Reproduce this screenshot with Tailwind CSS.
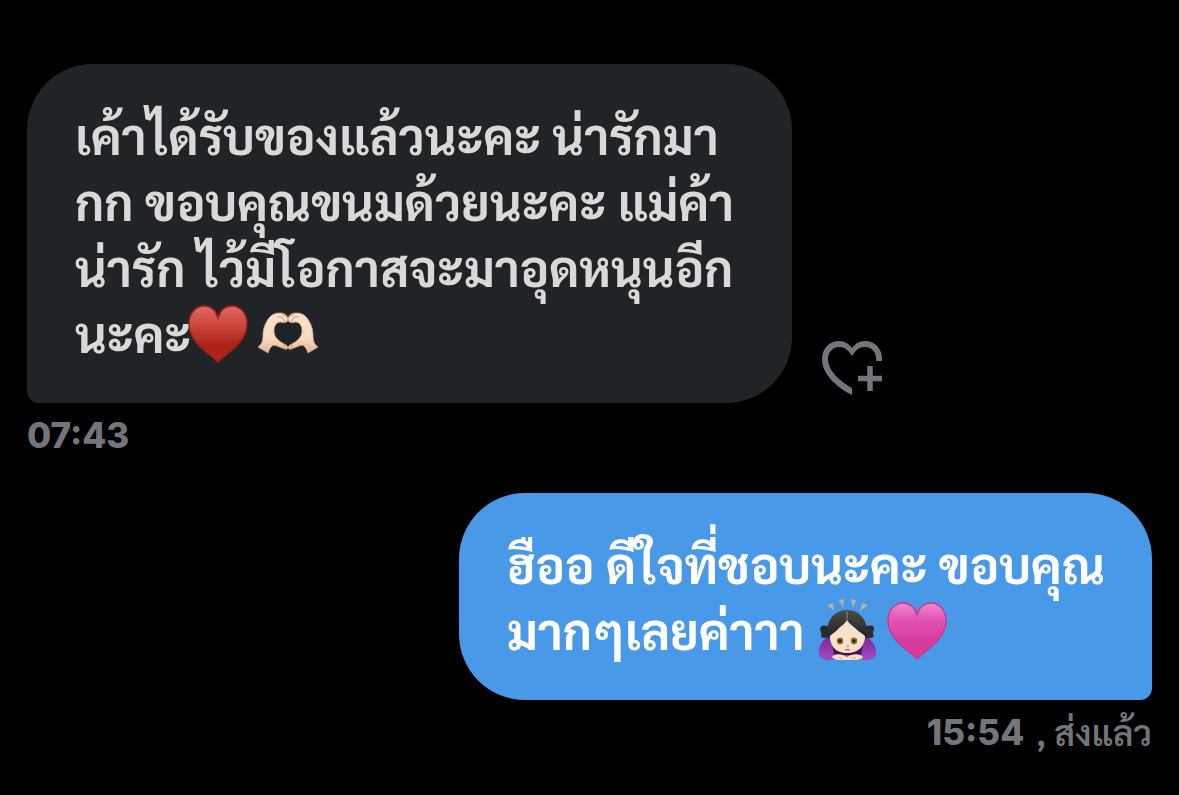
<!DOCTYPE html>
<html lang="th">
<head>
<meta charset="utf-8">
<meta name="viewport" content="width=device-width, initial-scale=1">
<title>ข้อความ</title>
<script src="https://cdn.jsdelivr.net/npm/@tailwindcss/browser@4"></script>
</head>
<body class="min-h-screen bg-black font-['Sarabun','Garuda','Liberation_Sans',sans-serif] antialiased">
<main class="flex flex-col px-[27px] pt-16">
  <article class="flex flex-col">
    <div class="flex items-end gap-[30px]">
      <p class="w-[68%] rounded-[66px] rounded-bl-xl bg-[#212427] px-12 pt-[38px] pb-[37px] text-[49px] leading-[66px] font-bold whitespace-nowrap text-[#d9d9d9]">เค้าได้รับของแล้วนะคะ น่ารักมา<br>กก ขอบคุณขนมด้วยนะคะ แม่ค้า<br>น่ารัก ไว้มีโอกาสจะมาอุดหนุนอีก<br><span class="flex items-center">นะคะ
        <svg class="-ml-1 h-[60px] w-[62px]" viewBox="0 0 62 60" role="img" aria-label="หัวใจสีแดง">
          <defs><linearGradient id="red" x1="0" y1="0" x2="0" y2="1"><stop offset="0" stop-color="#df6a64"/><stop offset=".35" stop-color="#cb463e"/><stop offset=".7" stop-color="#ab2219"/><stop offset="1" stop-color="#b3231c"/></linearGradient></defs>
          <path d="M31 59C25 52 2 40 2 21C2 10 9 3 17 3C24 3 29 8 31 15C33 8 38 3 45 3C53 3 60 10 60 21C60 40 37 52 31 59Z" fill="url(#red)" stroke="#9f1f19" stroke-width="1.5"/>
        </svg>
        <svg class="ml-2 h-[60px] w-[62px]" viewBox="0 0 62 60" role="img" aria-label="มือรูปหัวใจ">
          <defs><linearGradient id="skin" x1="0" y1="0" x2="0" y2="1"><stop offset="0" stop-color="#fae2cc"/><stop offset=".65" stop-color="#f6dac2"/><stop offset="1" stop-color="#e3b394"/></linearGradient></defs>
          <g id="hand"><path d="M1 44C5 41 6 38 6 32C6 25 9 19 12 15C15 11 19 10 23 10C28 10 31 13 31 17C30 20 27 20 24 19C19 19 17 23 17 28C17 35 23 39 29 42C32 44 31 47 28 46C22 44 17 41 15 43C13 45 12 47 11 50Z" fill="url(#skin)" stroke="#d9a688" stroke-width=".8"/><path d="M20 14L25 14L28 19M25 11L30 14M27 42L28 45" fill="none" stroke="#d09b7c" stroke-width="1"/></g>
          <use href="#hand" transform="matrix(-1 0 0 1 62 0)"/>
        </svg></span></p>
      <button type="button" aria-label="เพิ่มความรู้สึก" class="mb-2 text-[#72767a]">
        <svg class="h-[54px] w-[61px]" viewBox="0 0 61 54" fill="none"><path d="M30 54C18 48 0 35 0 18C0 7 8 0 17 0C23 0 27 3 30 7C33 3 37 0 43 0C53 0 61 8 60 20H54C55 12 50 6 43 6C37 6 34 9 30 15C26 9 23 6 17 6C11 6 6 11 6 18C6 30 18 40 30 47Z" fill="currentColor"/><path d="M48 25V50M36 37.500H60" stroke="currentColor" stroke-width="5.500"/></svg>
      </button>
    </div>
    <time datetime="07:43" class="mt-2 font-['Inter'] text-[35px] leading-[48px] font-extrabold text-[#72767a]">07:43</time>
  </article>
  <article class="mt-[34px] flex flex-col items-end">
    <p class="w-[693px] max-w-full rounded-[66px] rounded-br-xl bg-[#4999e9] px-12 pt-[38px] pb-[37px] text-[49px] leading-[66px] font-bold whitespace-nowrap text-white">ฮืออ ดีใจที่ชอบนะคะ ขอบคุณ<br><span class="flex items-center">มากๆเลยค่าาา
      <svg class="ml-[14px] h-[66px] w-[60px]" viewBox="0 0 60 66" role="img" aria-label="ผู้หญิงโค้งคำนับ">
        <defs>
          <linearGradient id="hair" x1="0" y1="0" x2="0" y2="1"><stop offset="0" stop-color="#4c4c4b"/><stop offset="1" stop-color="#1f2020"/></linearGradient>
          <linearGradient id="sleeve" x1="0" y1="0" x2="0" y2="1"><stop offset="0" stop-color="#7a2b99"/><stop offset="1" stop-color="#a34cc2"/></linearGradient>
        </defs>
        <path d="M9 8L15 6L16 14ZM21 3L26 2L25 11ZM33 2L38 3L35 11ZM44 6L50 8L42 14Z" fill="#b5b1a4"/>
        <path d="M11 40C4 42 0 50 1 58C4 64 13 64 18 62H41C46 64 55 64 58 58C59 50 54 42 48 40Z" fill="url(#sleeve)"/>
        <path d="M14 48C18 58 41 58 45 48L43 58H16Z" fill="#431653"/>
        <path d="M12 30Q2 26 2 33Q4 35 3 40Q10 43 14 38ZM46 30Q57 26 56 33Q54 35 56 40Q48 43 45 38Z" fill="#2a2b2b"/>
        <path d="M12 37C12 28 20 19 29 19C38 19 47 28 47 37C48 49 40 56 29 56C18 56 11 49 12 37Z" fill="#f8e1c9"/>
        <path d="M10 41C7 25 15 13 29 13C43 13 51 25 49 41C47 38 42 36 37 31C33 28 30 25 29 23C28 25 25 28 21 31C17 36 12 38 10 41Z" fill="url(#hair)"/>
        <path d="M29 14V23" stroke="#8a8580" stroke-width="1"/>
        <ellipse cx="22" cy="44" rx="4.500" ry="3.800" fill="#fff5df"/><ellipse cx="36" cy="44" rx="4.500" ry="3.800" fill="#fff5df"/>
        <circle cx="22" cy="44" r="3.400" fill="#9a7030"/><circle cx="36" cy="44" r="3.400" fill="#9a7030"/>
        <circle cx="22" cy="44" r="1.700" fill="#2d1b0c"/><circle cx="36" cy="44" r="1.700" fill="#2d1b0c"/>
        <path d="M28 49Q29 50 31 49" fill="none" stroke="#d7a688" stroke-width="1.500"/><path d="M27 53Q29 52 32 53" fill="none" stroke="#c46f6b" stroke-width="1.500"/>
        <path d="M14 60C17 56 24 57 29 60C34 57 41 56 45 60C42 64 34 63 29 63C24 63 17 64 14 60Z" fill="#f8e1c9"/>
        <path d="M20 60L24 62M38 60L34 62" stroke="#d9ad90" stroke-width="1"/>
      </svg>
      <svg class="ml-2 h-[60px] w-[62px]" viewBox="0 0 62 60" role="img" aria-label="หัวใจสีชมพู">
        <defs><linearGradient id="pink" x1="0" y1="0" x2="0" y2="1"><stop offset="0" stop-color="#f08acd"/><stop offset=".3" stop-color="#e354b2"/><stop offset=".7" stop-color="#d53a9e"/><stop offset="1" stop-color="#db3d88"/></linearGradient></defs>
        <path d="M31 59C25 52 2 40 2 21C2 10 9 3 17 3C24 3 29 8 31 15C33 8 38 3 45 3C53 3 60 10 60 21C60 40 37 52 31 59Z" fill="url(#pink)" stroke="#c73b98" stroke-width="1.5"/>
      </svg></span></p>
    <p class="mt-2 flex items-center gap-3 text-[#72767a]"><time datetime="15:54" class="font-['Inter'] text-[35px] leading-[48px] font-extrabold">15:54</time><span class="text-[35px] leading-[48px] font-semibold">, ส่งแล้ว</span></p>
  </article>
</main>
</body>
</html>
